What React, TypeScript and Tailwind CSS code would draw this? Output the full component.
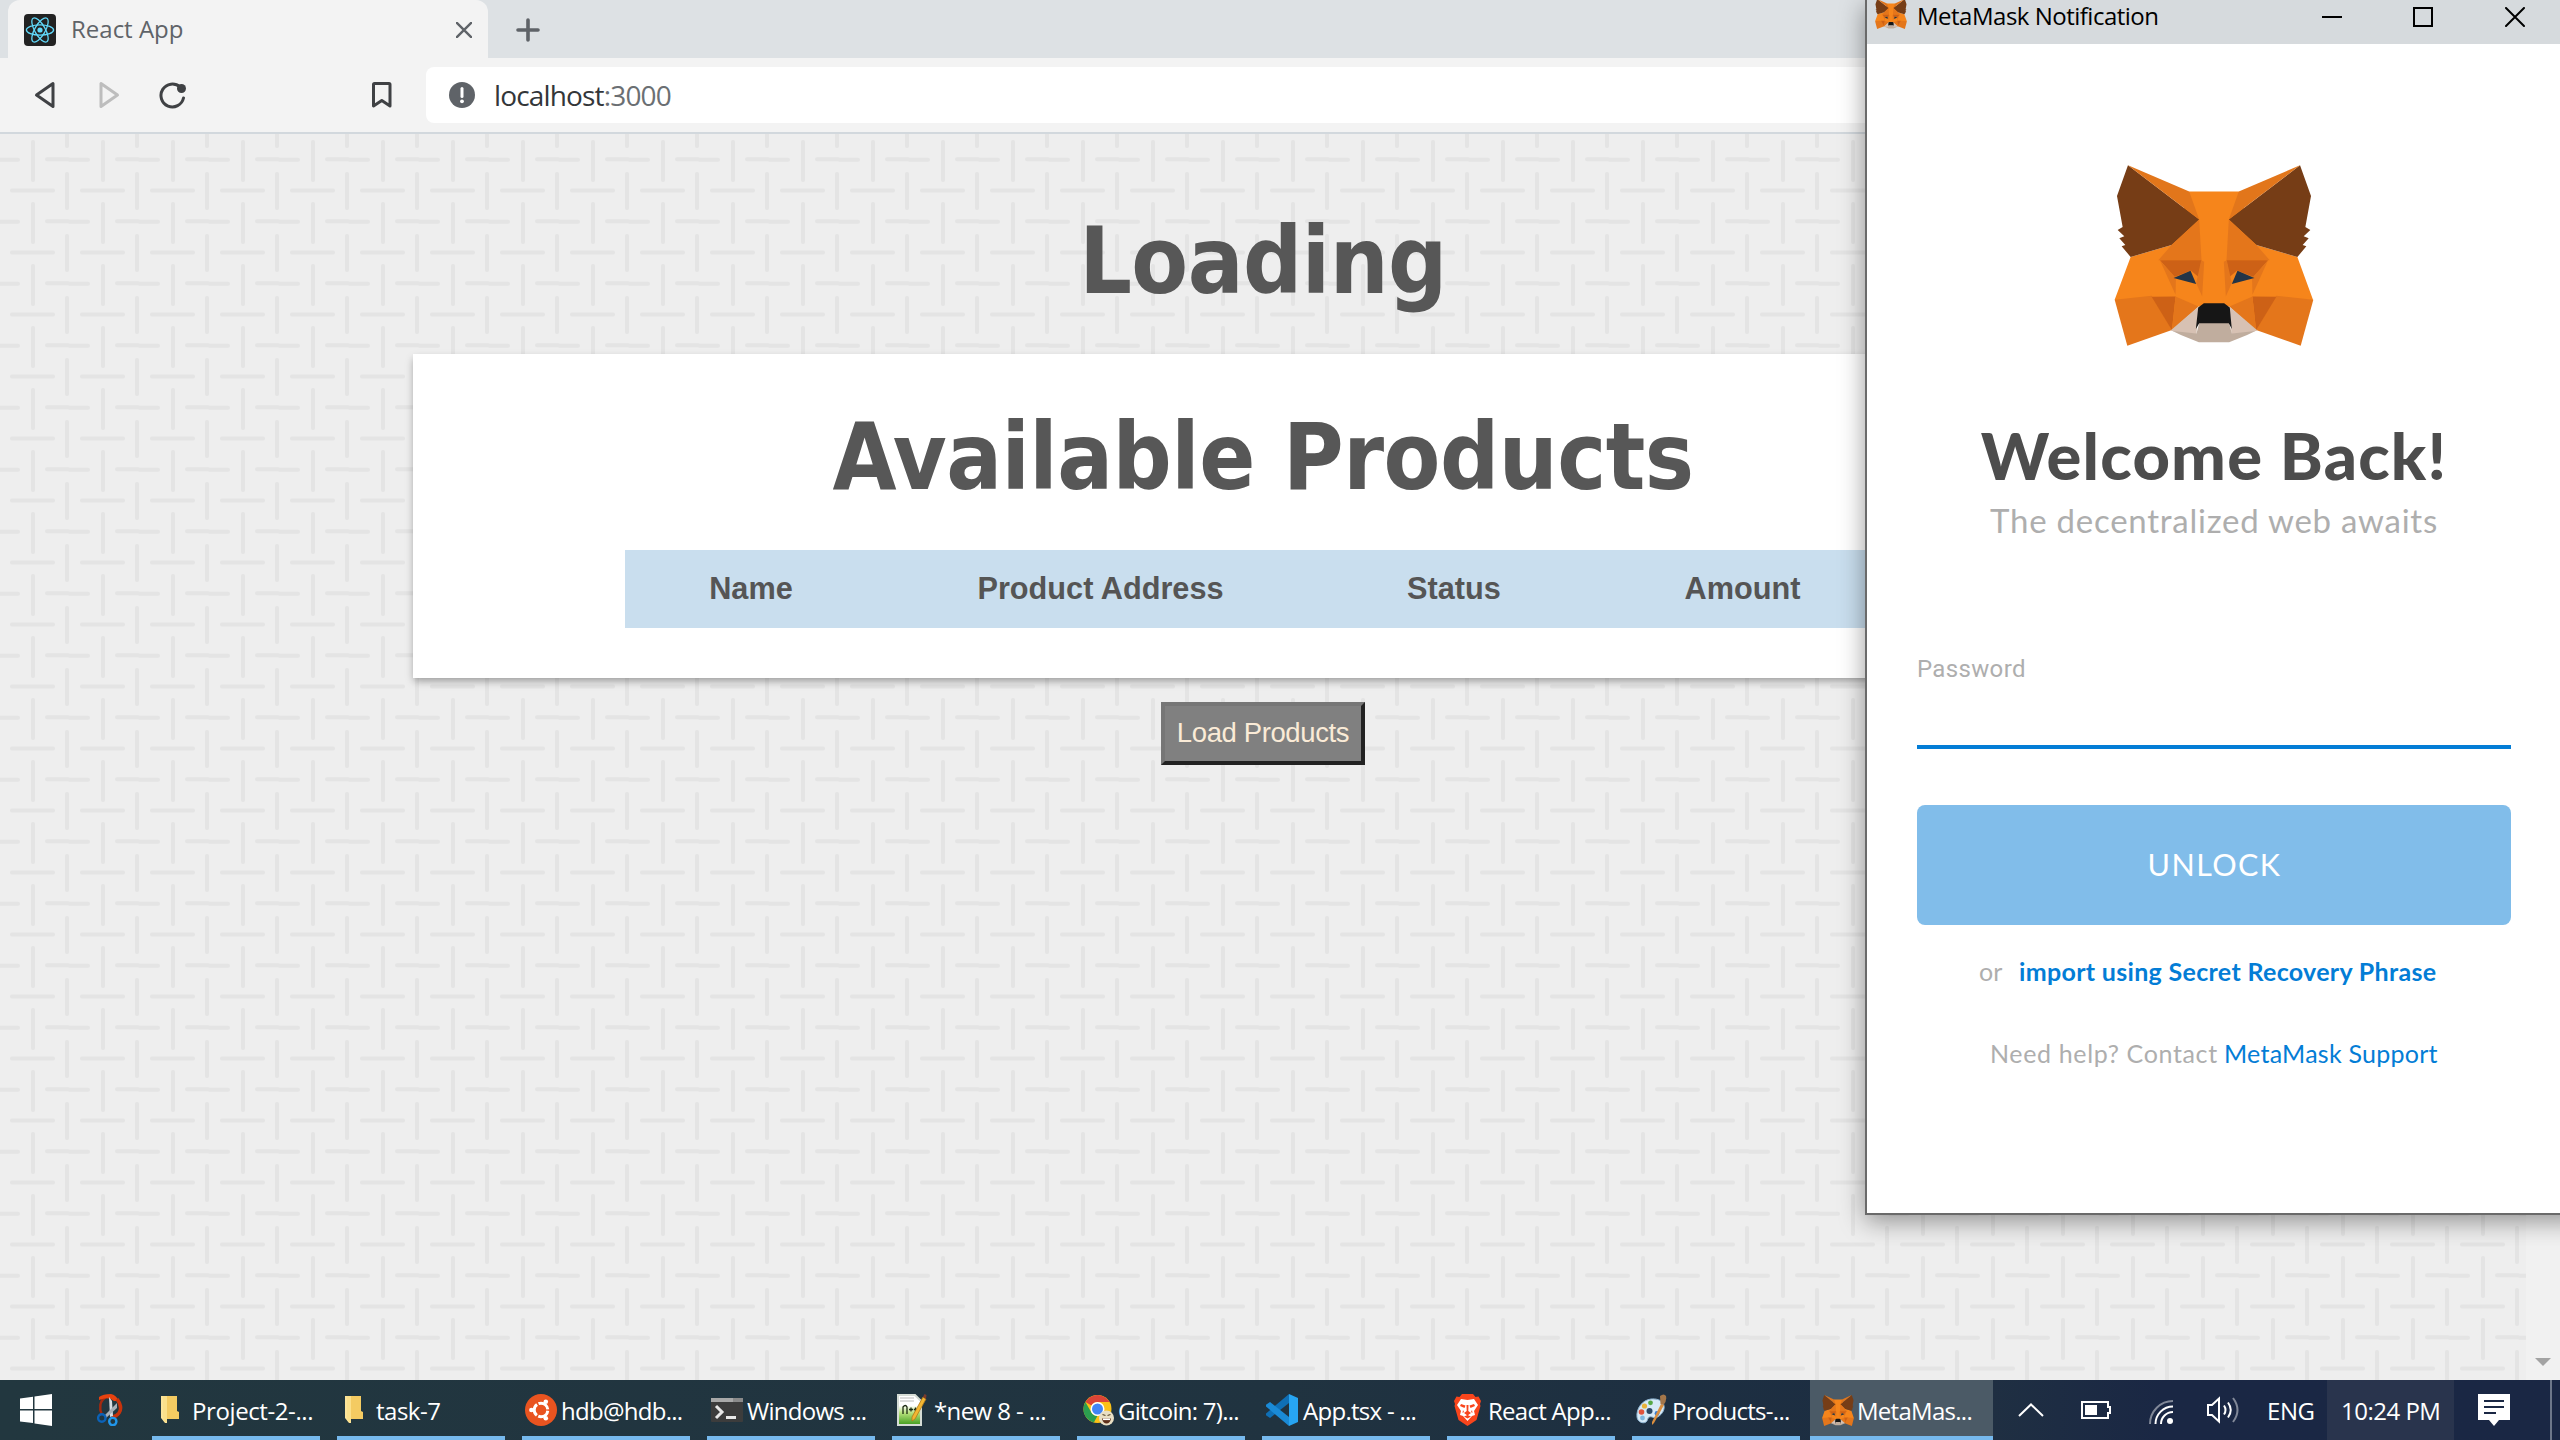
import React, { ReactNode } from "react";

/* ---------- Icons ---------- */

function FoxHalf() {
  return (
    <>
      <polygon fill="#763d16" points="144,78 358,240 275,316 152,352 125,320 136,316 118,296 133,290 113,271 128,262 111,170" />
      <polygon fill="#e2761b" points="144,78 328,156 358,240" />
      <polygon fill="#e4761b" points="358,240 275,316 235,362 365,363" />
      <polygon fill="#cd6116" points="240,362 365,362 356,412 333,392 284,412" />
      <polygon fill="#e4761b" points="240,362 284,410 288,420 287,465" />
      <polygon fill="#e4761b" points="364,362 373,366 371,400 367,470 349,430" />
      <polygon fill="#233447" points="281,415 332,393 349,433" />
      <polygon fill="#e4761b" points="104,480 215,468 276,570 142,617" />
      <polygon fill="#cd6116" points="215,471 287,470 276,571" />
      <polygon fill="#e4761b" points="287,470 356,500 276,571" />
      <polygon fill="#d7c1b3" points="272,572 356,500 350,582 300,580" />
    </>
  );
}

function Fox({ className }: { className: string }) {
  return (
    <svg className={className} viewBox="102 77 601 541" preserveAspectRatio="none">
      <polygon fill="#f6851b" points="328,156 477,156 530,316 653,352 700,480 528,571 448,500 356,500 276,571 104,480 152,352 275,316" />
      <FoxHalf />
      <g transform="translate(805 0) scale(-1 1)">
        <FoxHalf />
      </g>
      <polygon fill="#c0ad9e" points="278,573 350,581 358,549 448,549 456,581 527,573 502,585 448,607 357,607 303,585" />
      <polygon fill="#161616" points="372,490 433,490 450,503 456,567 447,550 358,550 348,567 355,503" />
    </svg>
  );
}

function ReactLogo() {
  return (
    <svg className="h-8 w-8 shrink-0" viewBox="0 0 32 32" fill="none" stroke="#61dafb" strokeWidth="1.3">
      <rect width="32" height="32" rx="4" fill="#222" stroke="none" />
      <circle cx="16" cy="16" r="2.6" fill="#61dafb" stroke="none" />
      <ellipse cx="16" cy="16" rx="13.6" ry="5.2" />
      <ellipse cx="16" cy="16" rx="13.6" ry="5.2" transform="rotate(60 16 16)" />
      <ellipse cx="16" cy="16" rx="13.6" ry="5.2" transform="rotate(120 16 16)" />
    </svg>
  );
}

function CloseIcon({ className, weight = 2 }: { className: string; weight?: number }) {
  return (
    <svg className={className} viewBox="0 0 20 20" fill="none" stroke="currentColor" strokeLinecap="round">
      <path d="M1 1 19 19M19 1 1 19" strokeWidth={weight} />
    </svg>
  );
}

const FolderIcon = (
  <svg className="h-7 w-[18px]" viewBox="0 0 18 28">
    <path d="M3 0h13v15l2 1v7H3z" fill="#f4cb62" />
    <path d="M0 0h2l4 4v23H4L0 22z" fill="#fce49a" />
    <path d="M2 0h4v23l-1 4-3-4z" fill="#fbe08b" />
  </svg>
);

const UbuntuIcon = (
  <svg className="h-8 w-8" viewBox="0 0 32 32">
    <circle cx="16" cy="16" r="16" fill="#e95420" />
    <circle cx="16" cy="16" r="6.8" fill="none" stroke="#fff" strokeWidth="3" strokeDasharray="12.6 1.64" strokeDashoffset="-0.8" />
    <circle cx="6.4" cy="16" r="2.3" fill="#fff" />
    <circle cx="20.8" cy="7.7" r="2.3" fill="#fff" />
    <circle cx="20.8" cy="24.3" r="2.3" fill="#fff" />
  </svg>
);

const TerminalIcon = (
  <svg className="h-6 w-8" viewBox="0 0 32 24">
    <rect width="32" height="24" rx="1" fill="#3c3c3c" />
    <path d="M0 0h32v4H0z" fill="#a8a8a8" />
    <path d="M22 0h10v4H22z" fill="#8a8a8a" />
    <path d="M5 8l6 6-6 6" fill="none" stroke="#e8e8e8" strokeWidth="3" />
    <path d="M15 19.5h10" stroke="#e8e8e8" strokeWidth="3" />
  </svg>
);

const NotepadIcon = (
  <svg className="h-8 w-[30px]" viewBox="0 0 30 32">
    <defs>
      <linearGradient id="np" x1="0" y1="0" x2="0" y2="1">
        <stop offset="0.35" stopColor="#fff" />
        <stop offset="0.6" stopColor="#b5e07a" />
        <stop offset="1" stopColor="#3f9c1c" />
      </linearGradient>
    </defs>
    <path d="M1 1h17l6 6v24H1z" fill="url(#np)" stroke="#d5dcd5" strokeWidth="2" />
    <path d="M3 4h14M3 7h14" stroke="#b9b9b9" strokeWidth="1" />
    <path d="M6 20v-7q2.500-3 4 0v7M12 15.500h4M14 13.500v4M16.800 15.500h3.400M18.500 13.500v4" fill="none" stroke="#1c2a12" strokeWidth="1.300" />
    <path d="M26 3l3 2-11 20-3 2 0-4z" fill="#f2b632" stroke="#b37a16" strokeWidth="0.800" />
    <path d="M26 3l1.500-3 2 1-.5 4z" fill="#7c3b2c" />
  </svg>
);

const ChromeIcon = (
  <svg className="h-8 w-[31px]" viewBox="0 0 31 32">
    <circle cx="14.500" cy="15" r="14" fill="#fbc116" />
    <path d="M2.400 8A14 14 0 0 1 26.600 8H14.500a7 7 0 0 0-6 3.500z" fill="#db4437" />
    <path d="M2.400 8l6 10.500a7 7 0 0 0 6 3.500l-3.500 6.600A14 14 0 0 1 2.400 8z" fill="#2b9e4f" />
    <circle cx="14.500" cy="15" r="7" fill="#fff" />
    <circle cx="14.500" cy="15" r="5.500" fill="#4285f4" />
    <circle cx="23.500" cy="24" r="7.500" fill="#e9dfc4" />
    <path d="M19.500 20.500l3 1M27.500 20.500l-3 1" stroke="#5b4a2c" strokeWidth="1.300" />
    <path d="M19 24.500h9q-1 5-4.500 5t-4.500-5z" fill="#5e2f1a" />
    <path d="M20 24.500h7v1.600h-7z" fill="#fff" />
  </svg>
);

const VSCodeIcon = (
  <svg className="h-8 w-8" viewBox="0 0 32 32">
    <path d="M23 0l9 4v24l-9 4z" fill="#27a5f2" />
    <path d="M23 0v9L4 24 0 21.300v-1.800z" fill="#0f6fb5" />
    <path d="M0 12.500v-1.800L4 8l19 15v9z" fill="#1a8ad6" />
  </svg>
);

const BraveIcon = (
  <svg className="h-8 w-[27px]" viewBox="0 0 27 32">
    <path d="M8 0h11l2.500 3 3-.5L27 7l-1 3 .5 2-4 14-9 6-9-6L.5 12 1 10 0 7l2.500-4.500 3 .5z" fill="#f9451c" />
    <path d="M7 5l6.500 1L20 5l4 6-4 6 1 4-3 1-4.500 5L9 22l-3-1 1-4-4-6z" fill="#fff" />
    <path d="M7 10l4.500 1.500L10.500 14 6 12zM20 10l-4.500 1.500 1 2.500 4.500-2zM12.500 11h2l-.2 6 2.700 2-3.500 2.500L10 19l2.700-2zM9 16l1 2-1.500 1zM18 16l-1 2 1.500 1zM10 22.500l3.500-1.500 3.500 1.500-3.500 2z" fill="#f9451c" />
  </svg>
);

const PaintIcon = (
  <svg className="h-8 w-8" viewBox="0 0 32 32">
    <path d="M15 5C6 6 0 15 1 23c.6 5 6 7 9 5 2-1.300 1-4 3.500-5 3-1 4 2 8 0C27 20 30 14 27 9c-2-3-7-4.600-12-4z" fill="#d6e9f6" stroke="#8fb6d3" strokeWidth="1" />
    <circle cx="5.500" cy="18" r="2.800" fill="#e0533d" />
    <circle cx="8.500" cy="12" r="2.600" fill="#e8b23a" />
    <circle cx="14.500" cy="8.800" r="2.400" fill="#56a845" />
    <circle cx="13.500" cy="17" r="3" fill="#2b4866" />
    <circle cx="21" cy="19.500" r="2.400" fill="#3b7dd0" />
    <circle cx="6.500" cy="24" r="2.400" fill="#7fb7e0" />
    <path d="M25 10l3 1-10 18-2 2 0-3z" fill="#d98e3f" />
    <path d="M24 2q4-3 6 0 1 5-2.500 9l-3-1z" fill="#a3764a" />
  </svg>
);

function WindowsLogo() {
  return (
    <svg className="h-8 w-8" viewBox="0 0 32 32" fill="#fff">
      <path d="M0 4.500l13-1.800V15H0zM14.500 2.500L32 0v15H14.500zM0 16.500h13v12.600L0 27.400zM14.500 16.500H32V32l-17.500-2.500z" />
    </svg>
  );
}

function SnipIcon() {
  return (
    <svg className="h-8 w-[26px]" viewBox="0 0 26 32" fill="none">
      <path d="M10 2.500C2 6 2 15 5 21" stroke="#a32a10" strokeWidth="2.500" />
      <path d="M2 3Q6 0 14 0q5 1 8 7l-5 0Q12 2 2 6z" fill="#e8420f" />
      <path d="M20 5q6 8 2 14-3 4-7 4" stroke="#c8330c" strokeWidth="3.500" />
      <path d="M12 3l3 4 1 15-3 1z" fill="#d9dde2" />
      <path d="M20 9l0 5-11 10-2-2z" fill="#a9b0b8" />
      <circle cx="4.800" cy="24" r="3.700" stroke="#0b62b8" strokeWidth="2.400" />
      <circle cx="15.800" cy="27.500" r="3.600" stroke="#2196ea" strokeWidth="2.400" />
    </svg>
  );
}

/* ---------- Browser ---------- */

function TabStrip() {
  return (
    <div className="flex h-[58px] items-center bg-[#dde1e4] pl-2">
      <div className="flex h-full w-[480px] items-center rounded-t-xl bg-[#f3f3f3] pt-[2px] pr-4 pl-4">
        <ReactLogo />
        <span className="mb-[2px] ml-[15px] flex-1 text-[24px] leading-8 text-[#5f6368]">React App</span>
        <CloseIcon className="h-4 w-4 text-[#5f6368]" weight={3} />
      </div>
      <svg className="mt-[2px] ml-7 h-6 w-6" viewBox="0 0 24 24" stroke="#5f6368" strokeWidth="3.600" strokeLinecap="round">
        <path d="M12 2v20M2 12h20" />
      </svg>
    </div>
  );
}

function Toolbar() {
  return (
    <div className="flex h-[76px] items-center border-b-2 border-[#d2d8dd] bg-[#f3f3f3] pl-[34px] text-[#3f4144]">
      <svg className="h-7 w-[22px]" viewBox="0 0 22 28" fill="none" stroke="currentColor" strokeWidth="3" strokeLinejoin="round">
        <path d="M19 2.500v23L2.500 14z" />
      </svg>
      <svg className="ml-[42px] h-7 w-[22px]" viewBox="0 0 22 28" fill="none" stroke="#bdbdbd" strokeWidth="3" strokeLinejoin="round">
        <path d="M3 2.500v23L19.500 14z" />
      </svg>
      <svg className="ml-[38px] h-7 w-7" viewBox="0 0 28 28" fill="none" stroke="currentColor" strokeWidth="3" strokeLinecap="round">
        <path d="M22 6a11.400 11.400 0 1 0 3.500 11" />
        <circle cx="23.500" cy="7.500" r="4.500" fill="currentColor" stroke="none" />
      </svg>
      <svg className="ml-[185px] h-7 w-[22px]" viewBox="0 0 22 28" fill="none" stroke="currentColor" strokeWidth="3" strokeLinejoin="round">
        <path d="M2.500 3.500q0-1 1-1h14.500q1 0 1 1V25l-8.200-5.500L2.500 25z" />
      </svg>
      <div className="ml-[33px] flex h-14 flex-1 items-center rounded-lg bg-white pl-[23px]">
        <svg className="h-[26px] w-[26px]" viewBox="0 0 26 26">
          <circle cx="13" cy="13" r="13" fill="#5f6368" />
          <path d="M13 6.500v8" stroke="#fff" strokeWidth="3" strokeLinecap="round" />
          <circle cx="13" cy="19.300" r="1.900" fill="#fff" />
        </svg>
        <span className="ml-[19px] text-[28px] leading-10 tracking-[-0.840px] text-[#333639]">
          localhost<span className="text-[#6b6f73]">:3000</span>
        </span>
      </div>
    </div>
  );
}

function WeaveBackground() {
  return (
    <svg className="absolute inset-0 h-full w-full">
      <defs>
        <pattern id="weave" width="70" height="62" patternUnits="userSpaceOnUse">
          <rect width="70" height="62" fill="#eeeeee" />
          <g stroke="#e4e4e4" strokeWidth="4" strokeLinecap="round">
            <path d="M33 8v38M67 40v22M67 -2v14M12 56.500h41M47 25.200h21l2 .5M-2 25.800h20" fill="none" />
          </g>
        </pattern>
      </defs>
      <rect width="100%" height="100%" fill="url(#weave)" />
    </svg>
  );
}

function Page() {
  return (
    <div className="relative flex min-h-0 flex-1 overflow-hidden">
      <WeaveBackground />
      <main className="relative flex w-[2526px] flex-col items-center pt-[78px] font-['Liberation_Sans',sans-serif] text-[#555]">
        <h1 className="font-['DejaVu_Sans_Condensed','DejaVu_Sans',sans-serif] text-[92px] leading-[100px] font-bold tracking-[-0.500px] text-[#575757]">
          Loading
        </h1>
        <section className="mt-[42px] flex h-[324px] w-[1700px] flex-col items-center bg-white pt-[54px] shadow-[0_4px_8px_-1px_rgba(0,0,0,0.36)]">
          <h2 className="font-['DejaVu_Sans_Condensed','DejaVu_Sans',sans-serif] text-[92px] leading-[100px] font-bold tracking-[-0.500px] text-[#575757]">
            Available Products
          </h2>
          <div className="mt-[42px] grid h-[78px] w-[1276px] grid-cols-[252px_447px_260px_317px] items-center bg-[#c9deee] text-center text-[30.700px] font-bold">
            <span>Name</span>
            <span>Product Address</span>
            <span>Status</span>
            <span>Amount</span>
          </div>
        </section>
        <button className="mt-6 h-[63px] w-[204px] border-4 border-t-[#767676] border-r-[#222] border-b-[#222] border-l-[#767676] bg-[#808080] pb-[2px] text-[27.500px] leading-8 tracking-[-0.380px] whitespace-nowrap text-[#faebd7]">
          Load Products
        </button>
      </main>
      <div className="relative flex flex-1 items-end justify-center bg-[#f1f1f1] pb-[14px]">
        <svg className="h-2 w-4" viewBox="0 0 16 8">
          <path d="M0 0h16L8 8z" fill="#a3a3a3" />
        </svg>
      </div>
    </div>
  );
}

/* ---------- Wallet popup ---------- */

function WalletPopup() {
  return (
    <div className="absolute top-0 left-[1865px] flex h-[1215px] w-[720px] flex-col border-b-2 border-l-2 border-[#6a6a6a] bg-white shadow-[0_6px_24px_rgba(0,0,0,0.4)]">
      <div className="flex h-11 shrink-0 items-start bg-[#d6dadd] pl-2 text-black">
        <Fox className="-mt-px h-[30px] w-8" />
        <span className="ml-[10px] h-8 w-[405px] text-[24px] leading-8 tracking-[-0.500px]">MetaMask Notification</span>
        <svg className="mt-[7px] h-5 w-5" viewBox="0 0 20 20">
          <path d="M0 9h20v2H0z" />
        </svg>
        <svg className="mt-[7px] ml-[71px] h-5 w-5" viewBox="0 0 20 20">
          <path d="M1 1h18v18H1z" fill="none" stroke="#000" strokeWidth="2" />
        </svg>
        <CloseIcon className="mt-[7px] ml-[72px] h-5 w-5" />
      </div>
      <div className="ml-[50px] flex w-[594px] flex-col items-center font-['Lato',sans-serif]">
        <Fox className="mt-[121px] h-[181px] w-[200px]" />
        <h2 className="mt-[77px] text-[65px] leading-[64px] font-black tracking-[1.200px] whitespace-nowrap text-[#4d4d4d]">Welcome Back!</h2>
        <p className="mt-[13px] text-[33px] leading-10 tracking-[0.750px] whitespace-nowrap text-[#aeaeae]">The decentralized web awaits</p>
        <label className="mt-[113px] self-start font-['Roboto',sans-serif] text-[24px] leading-8 tracking-[0.350px] text-[#aeaeae]">Password</label>
        <div className="mt-[60px] h-1 w-full bg-[#037dd6]" />
        <div className="mt-14 flex h-[120px] w-full items-center justify-center rounded-lg bg-[#81bdea] pb-[2px] pl-px text-[30.500px] leading-10 tracking-[1.400px] text-white">
          UNLOCK
        </div>
        <div className="mt-[30px] ml-[62px] flex self-start text-[25px] leading-8 whitespace-nowrap">
          <span className="w-[40px] text-[#aeaeae]">or</span>
          <span className="font-bold tracking-[0.320px] text-[#037dd6]">import using Secret Recovery Phrase</span>
        </div>
        <div className="mt-[50px] ml-[73px] flex self-start text-[25px] leading-8 whitespace-nowrap text-[#aeaeae]">
          <span className="w-[234px] tracking-[0.650px]">Need help? Contact</span>
          <span className="tracking-[0.250px] text-[#037dd6]">MetaMask Support</span>
        </div>
      </div>
    </div>
  );
}

/* ---------- Taskbar ---------- */

function Task({ icon, label, pad, gap }: { icon: ReactNode; label: string; pad: string; gap: string }) {
  return (
    <div className={`mr-[17px] flex h-full w-[168px] shrink-0 items-center border-b-4 border-[#76b9ed] pt-1 ${pad}`}>
      {icon}
      <span className={`mt-[2px] whitespace-nowrap ${gap}`}>{label}</span>
    </div>
  );
}

function Taskbar() {
  return (
    <div className="flex h-[60px] shrink-0 items-center bg-linear-to-r from-[#22373f] via-[#203340] to-[#182643] text-[24px] leading-8 tracking-[-0.720px] text-white">
      <div className="flex w-[152px] items-center pl-5">
        <WindowsLogo />
        <div className="ml-[45px]">
          <SnipIcon />
        </div>
      </div>
      <Task pad="pl-[9px]" gap="ml-[13px] tracking-[-0.400px]" label="Project-2-..." icon={FolderIcon} />
      <Task pad="pl-[8px]" gap="ml-[13px] tracking-[-0.500px]" label="task-7" icon={FolderIcon} />
      <Task pad="pl-[3px]" gap="ml-[4px]" label="hdb@hdb..." icon={UbuntuIcon} />
      <Task pad="pl-[4px]" gap="ml-[4px]" label="Windows ..." icon={TerminalIcon} />
      <Task pad="pl-[5px]" gap="ml-[7px] tracking-[-0.600px]" label="*new 8 - ..." icon={NotepadIcon} />
      <Task pad="pl-[6px]" gap="ml-[4px]" label="Gitcoin: 7)..." icon={ChromeIcon} />
      <Task pad="pl-[4px]" gap="ml-[5px]" label="App.tsx - ..." icon={VSCodeIcon} />
      <Task pad="pl-[7px]" gap="ml-[7px]" label="React App..." icon={BraveIcon} />
      <Task pad="pl-[4px]" gap="ml-[4px]" label="Products-..." icon={PaintIcon} />
      <div className="-ml-[7px] flex h-full w-[183px] shrink-0 items-center border-b-4 border-[#76b9ed] bg-[#4b5a66] pt-1 pl-3">
        <Fox className="h-[31px] w-8" />
        <span className="mt-[2px] ml-[3px] whitespace-nowrap">MetaMas...</span>
      </div>
      <div className="flex h-full flex-1 items-center bg-linear-to-r from-[#1f2f42] to-[#1a2744] to-30%">
        <svg className="ml-[25px] h-[14px] w-[26px]" viewBox="0 0 26 14" fill="none" stroke="#fff" strokeWidth="2">
          <path d="M1 13L13 1.500 25 13" />
        </svg>
        <svg className="ml-[37px] h-[18px] w-[30px]" viewBox="0 0 30 18">
          <path d="M1 1h26v5h2v6h-2v5H1z" fill="none" stroke="#fff" strokeWidth="2" />
          <path d="M4 4h12v10H4z" fill="#fff" />
        </svg>
        <svg className="mt-[4px] ml-[38px] h-6 w-6" viewBox="0 0 24 24" fill="none" stroke="#fff" strokeWidth="2">
          <path d="M1 24A23 23 0 0 1 24 1" opacity="0.450" />
          <path d="M6.500 24A17.500 17.500 0 0 1 24 6.500M12 24A12 12 0 0 1 24 12" />
          <circle cx="21" cy="21" r="3" fill="#fff" stroke="none" />
        </svg>
        <svg className="ml-[34px] h-7 w-[34px]" viewBox="0 0 34 28" fill="none" stroke="#fff" strokeWidth="2">
          <path d="M1 9h4l7-6.500v23L5 19H1z" />
          <path d="M17 9.500q3 4.500 0 9M21 6.500q5.500 7.500 0 15" />
          <path d="M26 2q9 12 0 24" opacity="0.450" />
        </svg>
        <span className="mt-[2px] ml-[26px] w-[60px] tracking-[-0.400px]">ENG</span>
        <div className="flex h-full w-[127px] items-center bg-[#29344d] pt-[2px] pl-[14px] whitespace-nowrap">
          <span className="tracking-[-0.500px]">10:24 PM</span>
        </div>
        <svg className="ml-6 h-8 w-8" viewBox="0 0 32 32">
          <path d="M0 0h32v26H21l-5 6-5-6H0z" fill="#fff" />
          <path d="M6 7h20M6 13h20M6 19h12" stroke="#1a2744" strokeWidth="2.200" />
        </svg>
        <div className="ml-10 h-full w-[2px] bg-[#6d7789]" />
      </div>
    </div>
  );
}

export default function App() {
  return (
    <div className="relative flex h-[1440px] w-[2560px] flex-col overflow-hidden bg-[#eeeeee] font-['Open_Sans',sans-serif]">
      <TabStrip />
      <Toolbar />
      <Page />
      <WalletPopup />
      <Taskbar />
    </div>
  );
}
